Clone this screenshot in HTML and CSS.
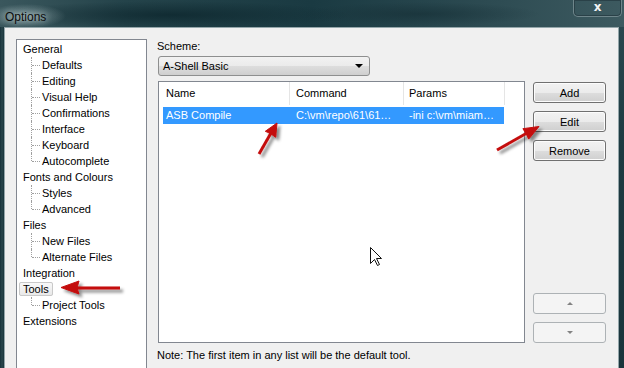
FILE: index.html
```html
<!DOCTYPE html>
<html lang="en">
<head>
  <meta charset="UTF-8" />
  <title>Options</title>
  <link rel="stylesheet" href="styles.css">
</head>
<body>
  <div class="window">
    <div class="titlebar">
      <span class="title">Options</span>
      <span class="close">x</span>
    </div>

    <div class="client">
      <ul class="tree">
        <li class="node">General
          <ul>
            <li class="child">Defaults</li>
            <li class="child">Editing</li>
            <li class="child">Visual Help</li>
            <li class="child">Confirmations</li>
            <li class="child">Interface</li>
            <li class="child">Keyboard</li>
            <li class="child">Autocomplete</li>
          </ul>
        </li>
        <li class="node">Fonts and Colours
          <ul>
            <li class="child">Styles</li>
            <li class="child">Advanced</li>
          </ul>
        </li>
        <li class="node">Files
          <ul>
            <li class="child">New Files</li>
            <li class="child">Alternate Files</li>
          </ul>
        </li>
        <li class="node">Integration</li>
        <li class="node"><span class="picked">Tools</span>
          <ul>
            <li class="child">Project Tools</li>
          </ul>
        </li>
        <li class="node">Extensions</li>
      </ul>

      <div class="main">
        <div class="label">Scheme:</div>
        <div class="combo">
          <span>A-Shell Basic</span>
          <span class="combo-arrow"></span>
        </div>

        <div class="tools-row">
          <div class="list">
            <div class="list-head">
              <div class="hcol h1">Name</div>
              <div class="hcol h2">Command</div>
              <div class="hcol h3">Params</div>
            </div>
            <div class="list-row selected">
              <div class="cell c1">ASB Compile</div>
              <div class="cell c2">C:\vm\repo\61\61…</div>
              <div class="cell c3">-ini c:\vm\miam…</div>
            </div>
          </div>

          <div class="buttons">
            <div class="btn-group">
              <button class="btn">Add</button>
              <button class="btn">Edit</button>
              <button class="btn">Remove</button>
            </div>
            <div class="btn-group">
              <button class="btn off"><span class="tri up"></span></button>
              <button class="btn off"><span class="tri down"></span></button>
            </div>
          </div>
        </div>

        <div class="note">Note: The first item in any list will be the default tool.</div>
      </div>
    </div>

    <!-- annotation arrows + mouse pointer drawn over the dialog -->
    <svg class="overlay" width="624" height="368" viewBox="0 0 624 368">
      <defs>
        <filter id="shade" x="-50%" y="-50%" width="200%" height="200%">
          <feDropShadow dx="3" dy="3" stdDeviation="1.6" flood-color="#000" flood-opacity="0.45" />
        </filter>
      </defs>
      <g filter="url(#shade)" fill="#c40d0d" stroke="#c40d0d">
        <line x1="120" y1="288" x2="76" y2="288" stroke-width="3" />
        <polygon points="61,287.5 79,281 77,288 79,294" stroke-width="1" />

        <line x1="259" y1="154" x2="271" y2="133" stroke-width="3" />
        <polygon points="277,123 275.7,137.3 270.5,133.5 265.3,131.3" stroke-width="1" />

        <line x1="497" y1="150" x2="527" y2="133" stroke-width="3" />
        <polygon points="539,126.5 528.7,139.1 526,133.5 522.9,128.7" stroke-width="1" />
      </g>
      <path d="M370.5 247.5 L370.5 263.5 L374.5 259.5 L377.5 265.5 L379.5 264.5 L376.5 258.5 L381.5 258.5 Z"
            fill="#fff" stroke="#111" stroke-width="1" stroke-linejoin="miter" />
    </svg>
  </div>
</body>
</html>
```

FILE: styles.css
```css
/* dialog frame */
body {
  margin: 0;
  background: #1e3a41;
  font-family: "Liberation Sans", Arial, sans-serif;
  font-size: 11px;
  color: #000;
}

.window {
  position: relative;
  width: 624px;
  height: 368px;
  overflow: hidden;
  background:
    linear-gradient(90deg, #17323a 0, #2a474d 2px, #1a353c 4px, transparent 4px),
    linear-gradient(180deg, #2c4a51 0, #1d3a41 40%, #19343b 100%);
}

.titlebar {
  height: 27px;
  display: flex;
  align-items: flex-start;
  justify-content: space-between;
  background:
    radial-gradient(ellipse 40px 12px at 26px 16px, rgba(190, 210, 212, 0.55), transparent),
    radial-gradient(ellipse 180px 14px at 170px 15px, rgba(10, 35, 42, 0.7), transparent),
    radial-gradient(ellipse 120px 12px at 420px 14px, rgba(20, 45, 52, 0.6), transparent),
    linear-gradient(90deg, #3a575d 0%, #24434a 20%, #1a3a42 50%, #2e4c53 80%, #3d5a60 100%);
}

.title {
  margin: 10px 0 0 5px;
  font-size: 12px;
  color: #0b0b0b;
  text-shadow: 0 0 6px rgba(230, 240, 240, 0.8);
}

.close {
  width: 47px;
  height: 16px;
  margin-right: 2px;
  border: 1px solid #6f868b;
  border-top: none;
  border-radius: 0 0 5px 5px;
  box-shadow: inset 0 0 0 1px #2a4148;
  color: #f4f4f4;
  font-family: "DejaVu Sans", sans-serif;
  font-weight: bold;
  font-size: 12px;
  line-height: 14px;
  text-align: center;
}

.client {
  margin: 0 5px 0 4px;
  height: 360px;
  box-sizing: border-box;
  border: 1px solid #94a6aa;
  border-bottom: none;
  background: #f0f0f0;
  padding: 11px 0 0 11px;
  display: flex;
  align-items: flex-start;
}

/* tree on the left */
.tree {
  list-style: none;
  margin: 0;
  padding: 1px 0 0 0;
  width: 131px;
  height: 340px;
  box-sizing: border-box;
  background: #fff;
  border: 1px solid #828790;
  line-height: 16px;
}

.tree ul {
  list-style: none;
  margin: 0;
  padding: 0;
}

.node {
  padding-left: 6px;
}

.child {
  position: relative;
  padding-left: 19px;
}
.child::before {
  content: "";
  position: absolute;
  left: 8px;
  top: 0;
  bottom: 0;
  border-left: 1px dotted #a0a0a0;
}
.child:last-child::before {
  bottom: 8px;
}
.child::after {
  content: "";
  position: absolute;
  left: 9px;
  top: 8px;
  width: 8px;
  border-top: 1px dotted #a0a0a0;
}

.picked {
  margin-left: -4px;
  padding: 0 3px;
  border: 1px solid #c9c9c9;
  border-radius: 2px;
  background: linear-gradient(#f8f8f8, #e9e9e9);
}

/* right side */
.main {
  margin-left: 10px;
  display: flex;
  flex-direction: column;
}

.label {
  line-height: 14px;
}

.combo {
  margin: 3px 0 0 1px;
  width: 212px;
  height: 20px;
  box-sizing: border-box;
  border: 1px solid #8e8f8f;
  border-radius: 3px;
  background: linear-gradient(#f2f2f2 0%, #ebebeb 50%, #dddddd 51%, #cfcfcf 100%);
  display: flex;
  align-items: center;
  justify-content: space-between;
  padding: 0 6px 0 4px;
}

.combo-arrow {
  width: 0;
  height: 0;
  border-left: 4px solid transparent;
  border-right: 4px solid transparent;
  border-top: 4px solid #000;
}

.tools-row {
  display: flex;
  margin: 5px 0 0 1px;
}

.list {
  width: 367px;
  height: 262px;
  box-sizing: border-box;
  border: 1px solid #828790;
  background: #fff;
}

.list-head {
  display: flex;
  height: 23px;
  line-height: 23px;
}

.hcol {
  box-sizing: border-box;
  border-right: 1px solid #e5e5e5;
}
.h1 { width: 131px; padding-left: 7px; }
.h2 { width: 114px; padding-left: 6px; }
.h3 { width: 101px; padding-left: 5px; }

.list-row {
  display: flex;
  margin: 2px 0 0 4px;
  width: 341px;
  height: 17px;
  line-height: 17px;
}

.selected {
  background: #3399ff;
  color: #fff;
}

.cell {
  box-sizing: border-box;
  white-space: nowrap;
  overflow: hidden;
}
.c1 { width: 127px; padding-left: 3px; }
.c2 { width: 114px; padding-left: 6px; }
.c3 { width: 100px; padding-left: 5px; }

.buttons {
  margin-left: 8px;
  width: 73px;
  padding-top: 1px;
  display: flex;
  flex-direction: column;
  justify-content: space-between;
}

.btn-group {
  display: flex;
  flex-direction: column;
  gap: 8px;
}

.btn {
  height: 21px;
  margin: 0;
  padding: 0;
  font-family: inherit;
  font-size: 11px;
  color: #000;
  border: 1px solid #707070;
  border-radius: 3px;
  background: linear-gradient(#f2f2f2 0%, #ebebeb 50%, #dddddd 51%, #cfcfcf 100%);
  box-shadow: inset 0 0 0 1px #fcfcfc;
}

.btn.off {
  border-color: #adb2b5;
  background: #f4f4f4;
  box-shadow: none;
  display: flex;
  align-items: center;
  justify-content: center;
}

.tri {
  width: 0;
  height: 0;
  border-left: 3px solid transparent;
  border-right: 3px solid transparent;
}
.tri.up { border-bottom: 3px solid #838383; }
.tri.down { border-top: 3px solid #838383; }

.note {
  margin-top: 5px;
  line-height: 14px;
}

.overlay {
  position: absolute;
  top: 0;
  left: 0;
  pointer-events: none;
}
```
